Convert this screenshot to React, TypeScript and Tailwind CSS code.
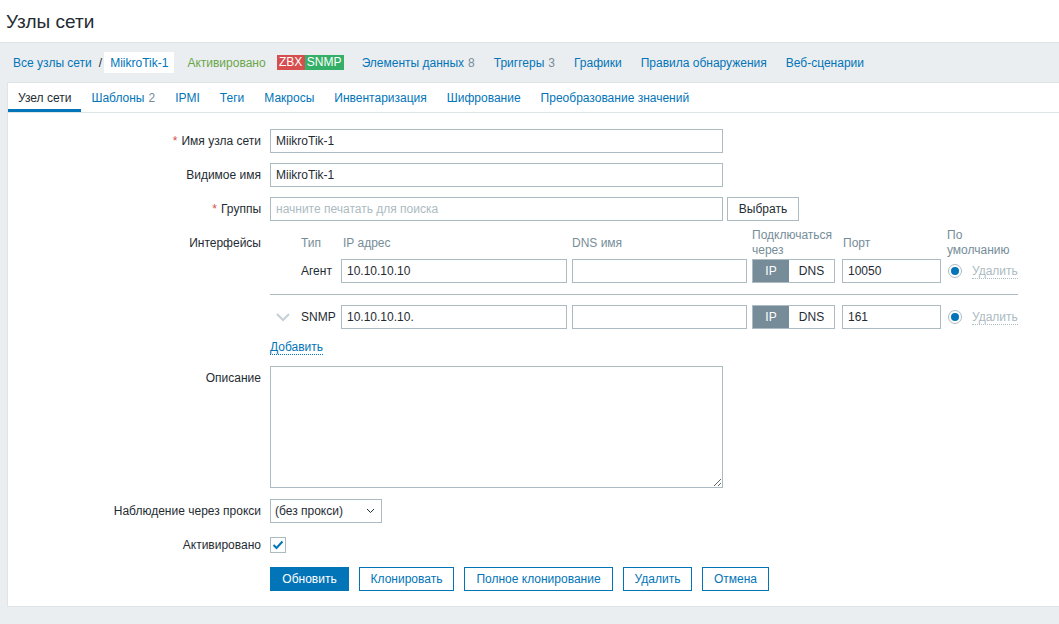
import React from "react";

const inputCls =
  "h-[24px] border border-[#acbbc2] bg-white px-[5px] text-[12px] text-[#1f2c33] outline-none";

function Row({ label, required, children, className = "" }: { label: string; required?: boolean; children: React.ReactNode; className?: string }) {
  return (
    <div className={`flex ${className}`}>
      <div className="w-[262px] shrink-0 pr-[9px] text-right leading-[24px]">
        {required && <span className="text-[#d64e4e] mr-[4px]">*</span>}
        {label}
      </div>
      <div className="min-w-0">{children}</div>
    </div>
  );
}

function Chevron() {
  return (
    <svg width="16" height="10" viewBox="0 0 16 10" className="ml-[5px]">
      <path d="M2 2 L8 8 L14 2" fill="none" stroke="#c5d0d5" strokeWidth="2" />
    </svg>
  );
}

function Radio() {
  return (
    <span className="flex h-[14px] w-[14px] items-center justify-center rounded-full border border-[#acbbc2] bg-white">
      <span className="h-[8px] w-[8px] rounded-full bg-[#0275b8]" />
    </span>
  );
}

function InterfaceRow({ type, ip, port, chevron }: { type: string; ip: string; port: string; chevron?: boolean }) {
  return (
    <div className="grid grid-cols-[26px_35px_226px_175px_85px_100px_71px] gap-x-[5px] items-center h-[24px]">
      <div>{chevron && <Chevron />}</div>
      <div>{type}</div>
      <input className={`${inputCls} w-[226px]`} defaultValue={ip} />
      <input className={`${inputCls} w-[175px]`} defaultValue="" />
      <div className="flex h-[24px] w-[83px] border border-[#acbbc2]">
        <span className="flex w-[36px] items-center justify-center bg-[#768d99] text-white">IP</span>
        <span className="flex flex-1 items-center justify-center bg-white">DNS</span>
      </div>
      <input className={`${inputCls} w-[99px]`} defaultValue={port} />
      <div className="flex items-center pl-[1px]">
        <Radio />
        <span className="ml-[10px] text-[#acbbc2] border-b border-dotted border-[#acbbc2] leading-[14px]">Удалить</span>
      </div>
    </div>
  );
}

export default function App() {
  const navLinks: [string, string?][] = [
    ["Элементы данных", "8"],
    ["Триггеры", "3"],
    ["Графики"],
    ["Правила обнаружения"],
    ["Веб-сценарии"],
  ];
  const tabs: [string, string?][] = [
    ["Шаблоны", "2"],
    ["IPMI"],
    ["Теги"],
    ["Макросы"],
    ["Инвентаризация"],
    ["Шифрование"],
    ["Преобразование значений"],
  ];

  return (
    <div className="min-h-[624px] bg-[#ebeef0] font-['Liberation_Sans',Arial,sans-serif] text-[12px] text-[#1f2c33]">
      <header className="flex h-[43px] items-center border-b border-[#dfe4e7] bg-white px-[6px]">
        <h1 className="text-[19px] leading-none">Узлы сети</h1>
      </header>

      <nav className="flex h-[39px] items-center pl-[13px]">
        <span className="text-[#0275b8]">Все узлы сети</span>
        <span className="ml-[7px] text-[#1f2c33]">/</span>
        <span className="ml-[2px] flex h-[21px] items-center bg-white px-[6px] text-[#0275b8]">MiikroTik-1</span>
        <span className="ml-[13px] text-[#6aa64a]">Активировано</span>
        <span className="ml-[11px] flex h-[15px] items-stretch text-white leading-[15px]">
          <span className="w-[28px] bg-[#d64e4e] text-center">ZBX</span>
          <span className="w-[39px] bg-[#34af67] text-center">SNMP</span>
        </span>
        {navLinks.map(([t, n], i) => (
          <span key={t} className={`${i === 0 ? "ml-[18px]" : "ml-[19px]"} text-[#0275b8]`}>
            {t}
            {n && <span className="ml-[4px] text-[#768d99]">{n}</span>}
          </span>
        ))}
      </nav>

      <main className="ml-[7px] border border-r-0 border-[#dfe4e7] bg-white">
        <div className="flex h-[30px] border-b border-[#dfe4e7]">
          <span className="flex items-center border-b-[3px] border-[#0275b8] px-[10px] pt-[3px]">Узел сети</span>
          {tabs.map(([t, n]) => (
            <span key={t} className="flex items-center px-[10px] text-[#0275b8]">
              {t}
              {n && <span className="ml-[4px] text-[#768d99]">{n}</span>}
            </span>
          ))}
        </div>

        <div className="pt-[16px] pb-[15px]">
          <Row label="Имя узла сети" required>
            <input className={`${inputCls} w-[453px]`} defaultValue="MiikroTik-1" />
          </Row>
          <Row label="Видимое имя" className="mt-[10px]">
            <input className={`${inputCls} w-[453px]`} defaultValue="MiikroTik-1" />
          </Row>
          <Row label="Группы" required className="mt-[10px]">
            <div className="flex gap-[4px]">
              <input className={`${inputCls} w-[453px] placeholder:text-[#acbbc2]`} placeholder="начните печатать для поиска" />
              <button className="h-[24px] w-[72px] border border-[#acbbc2] bg-white">Выбрать</button>
            </div>
          </Row>

          <div className="mt-[7px] flex">
            <div className="w-[262px] shrink-0 pr-[9px] text-right leading-[30px]">Интерфейсы</div>
            <div>
              <div className="grid h-[30px] grid-cols-[26px_35px_226px_175px_85px_100px_71px] gap-x-[5px] items-center leading-[15px] text-[#768d99]">
                <div />
                <div>Тип</div>
                <div className="pl-[2px]">IP адрес</div>
                <div>DNS имя</div>
                <div>Подключаться<br />через</div>
                <div className="pl-[1px]">Порт</div>
                <div>По<br />умолчанию</div>
              </div>
              <div className="mt-[1px]">
                <InterfaceRow type="Агент" ip="10.10.10.10" port="10050" />
              </div>
              <div className="mt-[11px] h-px w-[748px] bg-[#acbbc2]" />
              <div className="mt-[10px]">
                <InterfaceRow type="SNMP" ip="10.10.10.10." port="161" chevron />
              </div>
              <div className="mt-[9px] h-[18px] leading-[18px]">
                <span className="text-[#0275b8] border-b border-dotted border-[#0275b8] leading-[13px] inline-block">Добавить</span>
              </div>
            </div>
          </div>

          <Row label="Описание" className="mt-[10px]">
            <textarea className="block h-[122px] w-[453px] border border-[#acbbc2] bg-white outline-none" />
          </Row>

          <Row label="Наблюдение через прокси" className="mt-[11px]">
            <div className="flex h-[24px] w-[112px] items-center justify-between border border-[#acbbc2] bg-white pl-[4px] pr-[6px]">
              <span>(без прокси)</span>
              <svg width="9" height="6" viewBox="0 0 9 6">
                <path d="M1 1 L4.5 4.5 L8 1" fill="none" stroke="#1f2c33" strokeWidth="1" />
              </svg>
            </div>
          </Row>

          <Row label="Активировано" className="mt-[10px]">
            <div className="flex h-[24px] items-center">
              <span className="flex h-[16px] w-[16px] items-center justify-center border border-[#acbbc2] bg-white">
                <svg width="12" height="10" viewBox="0 0 12 10">
                  <path d="M1.5 5 L4.5 8 L10.5 1.5" fill="none" stroke="#0275b8" strokeWidth="2" />
                </svg>
              </span>
            </div>
          </Row>

          <Row label="" className="mt-[10px]">
            <div className="flex gap-[10px]">
              <button className="h-[24px] w-[79px] border border-[#0275b8] bg-[#0275b8] text-white">Обновить</button>
              <button className="h-[24px] w-[95px] border border-[#0275b8] bg-white text-[#0275b8]">Клонировать</button>
              <button className="h-[24px] w-[149px] border border-[#0275b8] bg-white text-[#0275b8]">Полное клонирование</button>
              <button className="h-[24px] w-[69px] border border-[#0275b8] bg-white text-[#0275b8]">Удалить</button>
              <button className="h-[24px] w-[67px] border border-[#0275b8] bg-white text-[#0275b8]">Отмена</button>
            </div>
          </Row>
        </div>
      </main>
    </div>
  );
}
